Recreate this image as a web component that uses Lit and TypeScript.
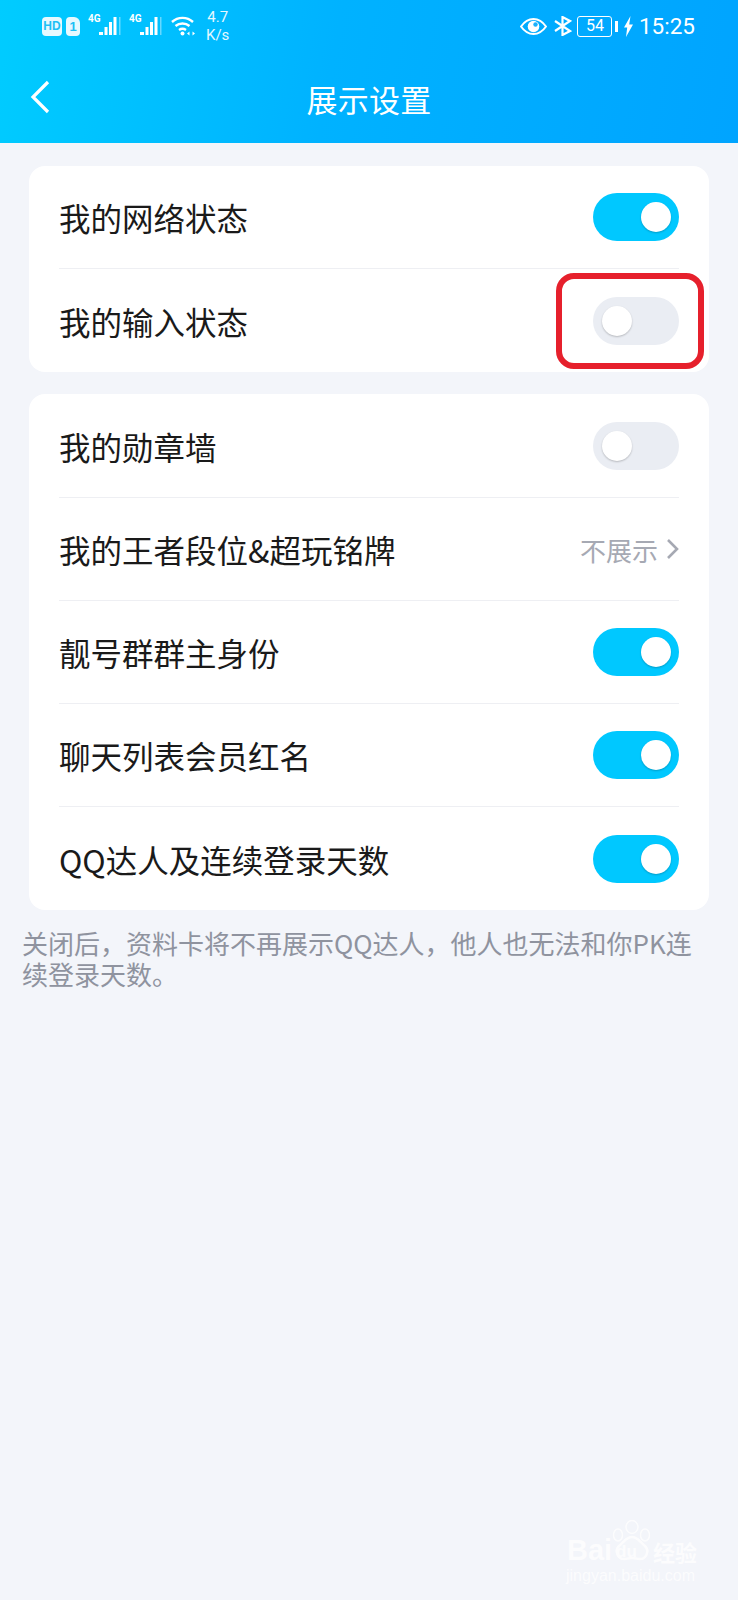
import { LitElement, css, html, svg } from 'lit';
import { customElement } from 'lit/decorators.js';

type Row =
  | { label: string; on: boolean }
  | { label: string; value: string };

const NETWORK: Row[] = [
  { label: '我的网络状态', on: true },
  { label: '我的输入状态', on: false },
];

const PROFILE: Row[] = [
  { label: '我的勋章墙', on: false },
  { label: '我的王者段位&超玩铭牌', value: '不展示' },
  { label: '靓号群群主身份', on: true },
  { label: '聊天列表会员红名', on: true },
  { label: 'QQ达人及连续登录天数', on: true },
];

const signal = svg`
  <svg class="signal" width="33" height="26" viewBox="0 0 33 26" fill="#fff">
    <rect x="11" y="19" width="4" height="3"/>
    <rect x="16.500" y="14" width="3" height="8"/>
    <rect x="21" y="9" width="3" height="13"/>
    <rect x="25.500" y="4" width="3" height="18"/>
    <rect x="31" y="4" width="1.500" height="18" opacity=".4"/>
  </svg>`;

@customElement('app-root')
export class AppRoot extends LitElement {
  static override styles = css`
    :host {
      display: block;
      position: relative;
      min-height: 1600px;
      background: #f3f5fa;
      font-family: 'Noto Sans CJK SC', 'Noto Sans', sans-serif;
      overflow: hidden;
    }
    .header {
      height: 143px;
      background: linear-gradient(100deg, #00ccff 0%, #00b2ff 45%, #00a4ff 100%);
      color: #fff;
    }
    .status {
      height: 52px;
      display: flex;
      align-items: center;
      justify-content: space-between;
      padding: 0 43px 0 42px;
      box-sizing: border-box;
    }
    .status-left,
    .status-right {
      display: flex;
      align-items: center;
    }
    .hd {
      width: 20px;
      height: 19px;
      border-radius: 4px;
      background: #e6f9ff;
      color: #1ec0f5;
      font: 700 12px/19px 'Liberation Sans', sans-serif;
      text-align: center;
    }
    .sim {
      width: 14px;
      height: 19px;
      margin-left: 4px;
      border-radius: 4px 6px 4px 4px;
      background: #e6f9ff;
      color: #1ec0f5;
      font: 700 13px/19px 'Liberation Sans', sans-serif;
      text-align: center;
    }
    .net {
      position: relative;
      margin-left: 8px;
      height: 26px;
      width: 33px;
    }
    .net span {
      position: absolute;
      left: 0;
      top: 0;
      font: 700 10px/12px 'Roboto', sans-serif;
    }
    .signal {
      display: block;
    }
    .wifi {
      margin-left: 9px;
    }
    .speed {
      margin-left: 11px;
      font: 400 15px/18px 'Roboto', sans-serif;
      opacity: 0.9;
    }
    .speed div {
      text-align: center;
    }
    .bluetooth {
      margin-left: 6px;
    }
    .battery {
      width: 35px;
      height: 21px;
      margin-left: 5px;
      box-sizing: border-box;
      border: 1.5px solid #fff;
      border-radius: 3px;
      font: 400 16px/18px 'Roboto', sans-serif;
      text-align: center;
    }
    .battery-tip {
      width: 2.500px;
      height: 11px;
      margin-left: 3px;
      background: #fff;
    }
    .bolt {
      margin-left: 6.500px;
    }
    .time {
      margin-left: 5.500px;
      font: 400 22.500px/28px 'Roboto', sans-serif;
    }
    .nav {
      position: relative;
      height: 91px;
      display: flex;
      align-items: center;
      justify-content: center;
    }
    .back {
      position: absolute;
      left: 30px;
      top: 28px;
    }
    .title {
      font-size: 31px;
      line-height: 44px;
      margin-top: 3px;
      letter-spacing: 0.3px;
    }
    .cards {
      display: flex;
      flex-direction: column;
      gap: 22px;
      margin: 23px 29px 0;
    }
    .card {
      background: #fff;
      border-radius: 16px;
      padding: 0 30px;
    }
    .card + .card {
      padding-top: 1px;
    }
    .row {
      height: 103px;
      box-sizing: border-box;
      display: flex;
      align-items: center;
      justify-content: space-between;
      border-bottom: 1px solid #eeeff3;
      color: #1a1a1a;
      font-size: 31.500px;
    }
    .row:last-child {
      border-bottom: none;
    }
    .toggle {
      width: 86px;
      height: 48px;
      box-sizing: border-box;
      border-radius: 24px;
      padding: 0 8px 0 9px;
      display: flex;
      align-items: center;
      justify-content: flex-start;
      background: #eaedf3;
    }
    .toggle.on {
      justify-content: flex-end;
      background: #00c8ff;
    }
    .knob {
      width: 30px;
      height: 30px;
      border-radius: 50%;
      background: #fff;
      box-shadow: 0 1px 2px rgba(0, 0, 0, 0.22);
    }
    .value {
      display: flex;
      align-items: center;
      gap: 8px;
      color: #a6a9b3;
      font-size: 26px;
    }
    .note {
      margin: 17px 22px 0;
      color: #8f939f;
      font-size: 26px;
      line-height: 31px;
    }
    .highlight {
      position: absolute;
      left: 556px;
      top: 273px;
      width: 148px;
      height: 96px;
      box-sizing: border-box;
      border: 6px solid #e6202c;
      border-radius: 18px;
    }
    .watermark {
      position: absolute;
      left: 566px;
      top: 1520px;
      width: 134px;
      height: 66px;
      color: #fff;
      font-family: 'Liberation Sans', sans-serif;
      opacity: 0.75;
    }
    .watermark span {
      position: absolute;
      white-space: nowrap;
    }
    .wm-bai {
      left: 1px;
      top: 13px;
      font: 700 29px/34px 'Liberation Sans', sans-serif;
    }
    .wm-paw {
      position: absolute;
      left: 44px;
      top: 0;
    }
    .wm-du {
      left: 50px;
      top: 23px;
      font: 700 17px/18px 'Liberation Sans', sans-serif;
    }
    .wm-cn {
      left: 87px;
      top: 17px;
      font: 700 22px/28px 'Noto Sans CJK SC', sans-serif;
    }
    .wm-url {
      left: 0;
      top: 47px;
      font: 400 16px/18px 'Liberation Sans', sans-serif;
    }
  `;

  private renderRow(row: Row) {
    const control =
      'value' in row
        ? html`<div class="value">
            ${row.value}
            <svg width="13" height="22" viewBox="0 0 13 22" fill="none" stroke="#a6a9b3" stroke-width="2.600">
              <path d="M2 2l9 9-9 9" />
            </svg>
          </div>`
        : html`<div class="toggle ${row.on ? 'on' : ''}"><div class="knob"></div></div>`;
    return html`<div class="row"><span>${row.label}</span>${control}</div>`;
  }

  override render() {
    return html`
      <div class="header">
        <div class="status">
          <div class="status-left">
            <div class="hd">HD</div>
            <div class="sim">1</div>
            <div class="net"><span>4G</span>${signal}</div>
            <div class="net"><span>4G</span>${signal}</div>
            <svg class="wifi" width="24" height="20" viewBox="0 0 24 20" fill="none" stroke="#fff" stroke-width="2.400">
              <path d="M1 6c6-5.500 15-5.500 21 0" />
              <path d="M4.500 10c4-3.400 10-3.400 14 0" />
              <path d="M8 14c2.200-1.500 4.800-1.500 7 0" />
              <circle cx="11.500" cy="17.500" r="2" fill="#fff" stroke="none" />
              <path d="M16 17.500l2.500-2v4zM24 17.500l-2.500-2v4z" fill="#fff" stroke="none" />
            </svg>
            <div class="speed"><div>4.7</div><div>K/s</div></div>
          </div>
          <div class="status-right">
            <svg width="27" height="17" viewBox="0 0 27 17">
              <path d="M1 8.500C4.500 3.500 9 1 13.500 1S22.500 3.500 26 8.500C22.500 13.500 18 16 13.500 16S4.500 13.500 1 8.500z" fill="none" stroke="#fff" stroke-width="2" />
              <circle cx="13.500" cy="8.500" r="5.800" fill="#fff" />
              <circle cx="15.500" cy="6.500" r="2.200" fill="#1ab0fb" />
            </svg>
            <svg class="bluetooth" width="19" height="20" viewBox="0 0 19 20" fill="none" stroke="#fff" stroke-width="2.200">
              <path d="M2 5l15 10-7.500 4V1L17 5 2 15" />
            </svg>
            <div class="battery">54</div>
            <div class="battery-tip"></div>
            <svg class="bolt" width="9" height="21" viewBox="0 0 9 21" fill="#fff">
              <path d="M6.500 0L0 11.500h3.200L2 21l7-12.500H5.200z" />
            </svg>
            <div class="time">15:25</div>
          </div>
        </div>
        <div class="nav">
          <svg class="back" width="20" height="34" viewBox="0 0 20 34" fill="none" stroke="#fff" stroke-width="3.200">
            <path d="M18 2L3 17l15 15" />
          </svg>
          <div class="title">展示设置</div>
        </div>
      </div>

      <div class="cards">
        <div class="card">${NETWORK.map((r) => this.renderRow(r))}</div>
        <div class="card">${PROFILE.map((r) => this.renderRow(r))}</div>
      </div>
      <div class="note">关闭后，资料卡将不再展示QQ达人，他人也无法和你PK连续登录天数。</div>

      <div class="highlight"></div>

      <div class="watermark">
        <span class="wm-bai">Bai</span>
        <svg class="wm-paw" width="44" height="42" viewBox="0 0 44 42" fill="none" stroke="#fff" stroke-width="1.500">
          <ellipse cx="22" cy="7" rx="6" ry="6.500" />
          <ellipse cx="8" cy="15" rx="4.500" ry="6" />
          <ellipse cx="35" cy="15" rx="4.500" ry="6" />
          <path d="M22 17c6 0 8 5 13 9 5 5 1 14-6 13-3-.500-5-1-7-1s-4 .5-7 1c-7 1-11-8-6-13 5-4 7-9 13-9z" fill="#fff" fill-opacity=".2" stroke-width="2.500" />
        </svg>
        <span class="wm-du">du</span>
        <span class="wm-cn">经验</span>
        <span class="wm-url">jingyan.baidu.com</span>
      </div>
    `;
  }
}

declare global {
  interface HTMLElementTagNameMap {
    'app-root': AppRoot;
  }
}
